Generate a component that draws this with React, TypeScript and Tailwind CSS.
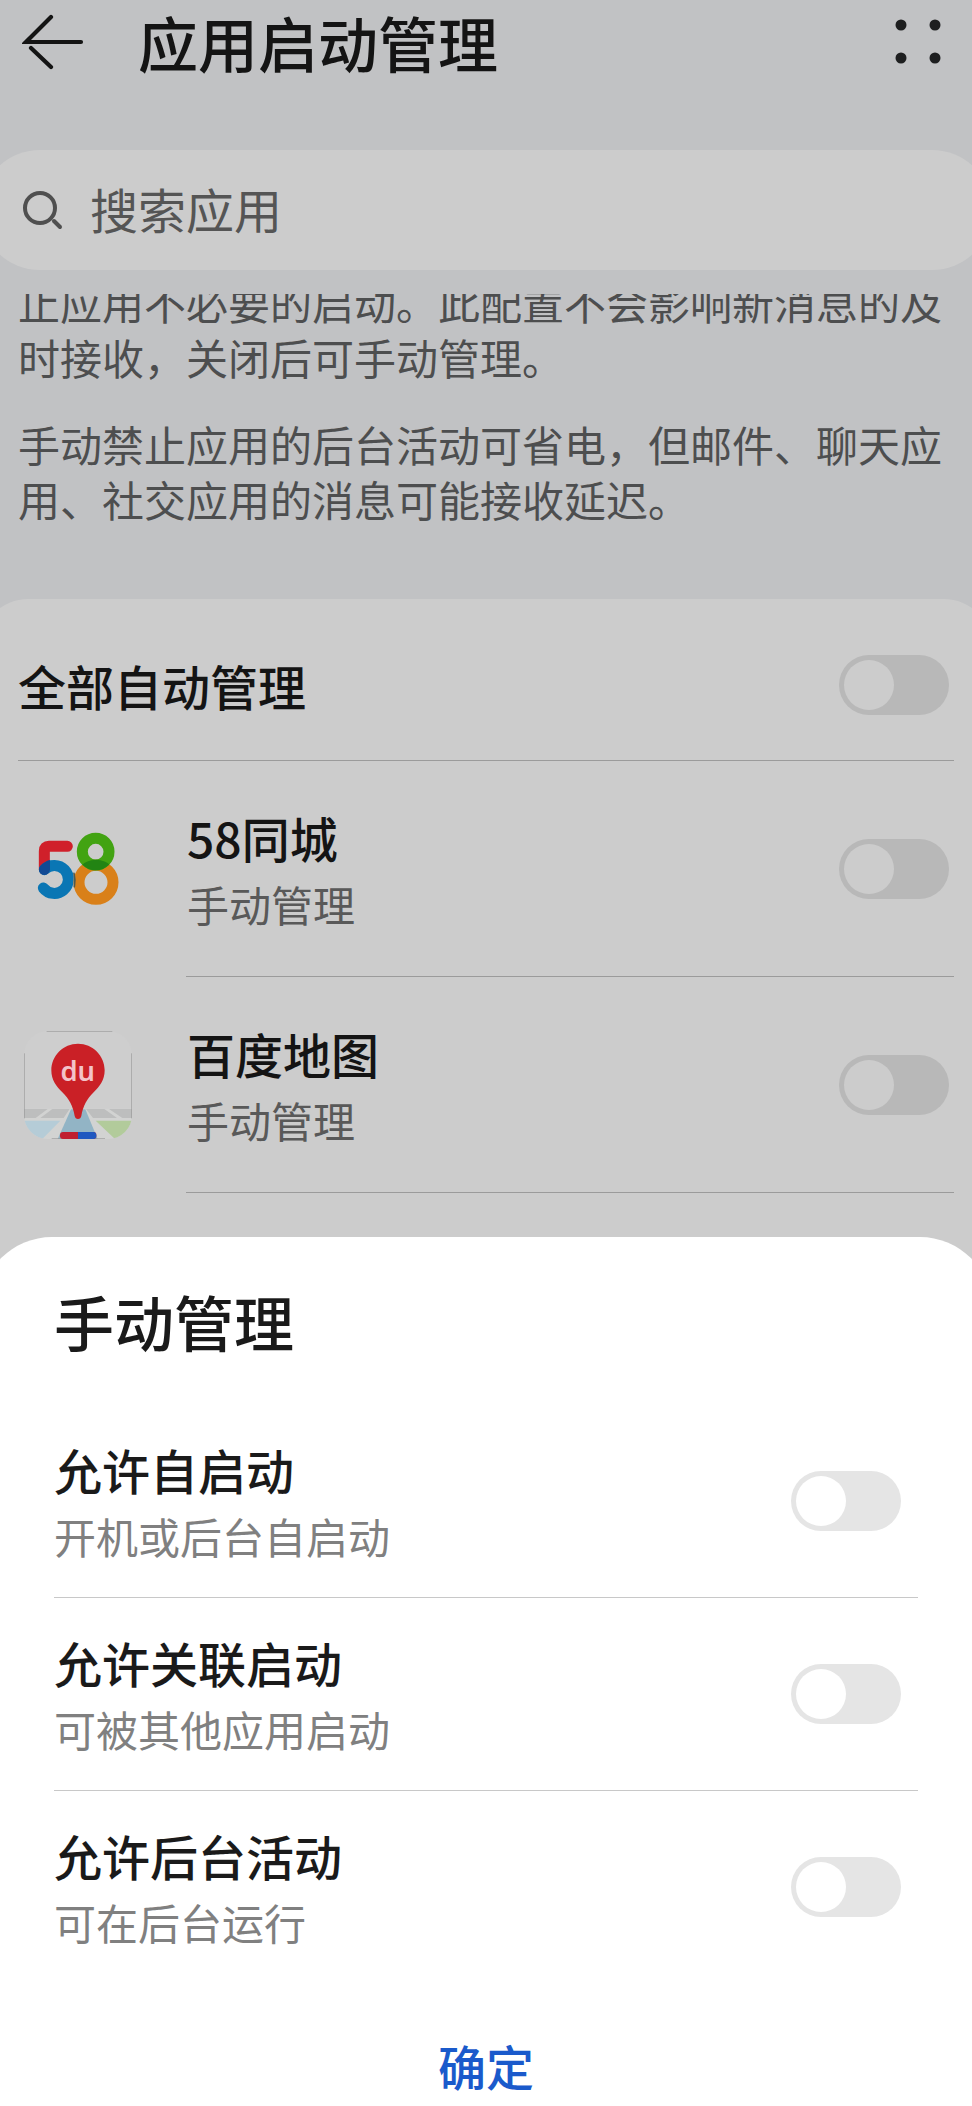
import { useId, type ReactNode } from 'react';

type Tone = 'dimmed' | 'light';

function Switch({ id, tone }: { id: string; tone: Tone }) {
  return (
    <input
      id={id}
      type="checkbox"
      role="switch"
      className={
        'h-[60px] w-[110px] shrink-0 cursor-pointer appearance-none rounded-full p-[5px] ' +
        "before:block before:size-[50px] before:rounded-full before:content-[''] checked:before:ml-auto " +
        (tone === 'dimmed' ? 'bg-[#b8b8b8] before:bg-[#cccccc]' : 'bg-[#e5e5e5] before:bg-white')
      }
    />
  );
}

function Logo58() {
  const clip = useId();
  return (
    <svg viewBox="-3 -15 324 324" className="size-[108px]" aria-hidden="true" fill="none" strokeLinecap="round">
      <clipPath id={clip + 'g'}>
        <circle cx="212" cy="95" r="56" />
      </clipPath>
      <clipPath id={clip + 'r'}>
        <path d="M41 116h34v32a17 17 0 0 1-34 0z" />
      </clipPath>
      <path d="M127 79H72Q58 79 58 93V148" stroke="#d0202a" strokeWidth="33" />
      <path d="M58 149A42 42 0 1 1 55 204" stroke="#0a76b4" strokeWidth="33" />
      <path d="M58 149A42 42 0 0 1 90 135" stroke="#124a94" strokeWidth="33" clipPath={`url(#${clip}r)`} />
      <circle cx="213" cy="187" r="51" stroke="#d98019" strokeWidth="33" />
      <circle cx="212" cy="95" r="40" stroke="#42a312" strokeWidth="33" />
      <circle cx="213" cy="187" r="51" stroke="#228413" strokeWidth="33" clipPath={`url(#${clip}g)`} />
      <path d="M147 160Q152 180 148 200" stroke="#4d5a52" strokeWidth="5" />
    </svg>
  );
}

function LogoMap() {
  const clip = useId();
  return (
    <svg viewBox="27 63 324 324" className="size-[108px]" aria-hidden="true">
      <clipPath id={clip}>
        <rect x="27" y="63" width="324" height="324" rx="72" />
      </clipPath>
      <g clipPath={`url(#${clip})`}>
        <rect x="27" y="63" width="324" height="324" fill="#cecece" />
        <rect x="27" y="296" width="324" height="91" fill="#d2d3d2" />
        <path d="M27 297H98L62 324H27zM112 297H164L146 324H76zM213 297H268L306 324H234zM282 297H351V324H322z" fill="#bdbebe" />
        <path d="M27 332H136L82 387H27z" fill="#b5ccd7" />
        <path d="M242 332H351V387H300z" fill="#b2cb9b" />
        <path d="M168 298H211L248 387H128z" fill="#92b4c5" />
      </g>
      <path d="M95 64H292M28 130V325M350 130V325M110 386H270" stroke="#929292" strokeWidth="2" />
      <rect x="135" y="366" width="109" height="21" rx="9" fill="#c01f31" />
      <path d="M189 366h46a9 9 0 0 1 9 9v3a9 9 0 0 1-9 9h-46z" fill="#1f58c0" />
      <path
        d="M189 101C145 101 109 137 109 181C109 210 124 229 142 247C162 267 174 288 179 318Q181 327 189 327Q197 327 199 318C204 288 216 267 236 247C254 229 269 210 269 181C269 137 233 101 189 101Z"
        fill="#ca2026"
      />
      <text x="188" y="214" textAnchor="middle" fontSize="82" fontWeight="600" fontFamily="'Noto Sans', sans-serif" fill="#f3c3c9">
        du
      </text>
    </svg>
  );
}

function AppRow({ id, name, note, logo }: { id: string; name: string; note: string; logo: ReactNode }) {
  return (
    <li className="flex pl-6">
      <div className="flex w-[162px] shrink-0 items-center">{logo}</div>
      <div className="mr-[18px] flex h-[216px] grow items-center justify-between border-b border-[#9b9b9b] pr-[5px]">
        <label htmlFor={id} className="block pl-px">
          <span className="block text-[48px] leading-[70px] font-medium text-[#141414]">{name}</span>
          <span className="block text-[42px] leading-[64px] text-[#595959]">{note}</span>
        </label>
        <Switch id={id} tone="dimmed" />
      </div>
    </li>
  );
}

const options = [
  { id: 'auto', title: '允许自启动', note: '开机或后台自启动' },
  { id: 'linked', title: '允许关联启动', note: '可被其他应用启动' },
  { id: 'background', title: '允许后台活动', note: '可在后台运行' },
];

export default function App() {
  return (
    <div className="min-h-screen overflow-hidden bg-[#c1c2c4] font-['Noto_Sans_CJK_SC',sans-serif]">
      <header className="flex h-[84px] items-center pr-[31px] pl-[22px]">
        <button type="button" aria-label="返回" className="shrink-0">
          <svg viewBox="0 0 62 60" className="h-[60px] w-[62px]" fill="none" stroke="#141414" strokeWidth="4.2" strokeLinecap="round">
            <path d="M59 30H4L29 5M9 36L29 55" />
          </svg>
        </button>
        <h1 className="grow pl-[54px] text-[60px] leading-[80px] font-medium text-[#141414]">应用启动管理</h1>
        <button type="button" aria-label="更多" className="shrink-0">
          <svg viewBox="0 0 46 46" className="size-[46px]" fill="#1e1f20">
            <circle cx="6" cy="6" r="5.5" />
            <circle cx="40" cy="6" r="5.5" />
            <circle cx="6" cy="39" r="5.5" />
            <circle cx="40" cy="39" r="5.5" />
          </svg>
        </button>
      </header>

      <label className="-mx-5 mt-[66px] flex h-[120px] items-center rounded-full bg-[#cccccc] pl-[42px]">
        <svg viewBox="0 0 42 40" className="h-10 w-[42px] shrink-0" fill="none" stroke="#4f4f4f" strokeWidth="4" strokeLinecap="round">
          <circle cx="18" cy="18" r="15" />
          <path d="M32 31L38 37" />
        </svg>
        <input
          type="text"
          aria-label="搜索应用"
          placeholder="搜索应用"
          className="h-[76px] grow bg-transparent pb-1 pl-[26px] text-[48px] text-[#1a1a1a] outline-none placeholder:text-[#555555]"
        />
      </label>

      <section className="mt-6 overflow-hidden px-[18px] text-[42px] leading-[55px] text-[#4d4e4f]">
        <p className="-mt-5">止应用不必要的启动。此配置不会影响新消息的及时接收，关闭后可手动管理。</p>
        <p className="mt-8">手动禁止应用的后台活动可省电，但邮件、聊天应用、社交应用的消息可能接收延迟。</p>
      </section>

      <main className="-mx-5 mt-[73px] rounded-t-[48px] bg-[#cccccc] px-5">
        <div className="mx-[18px] flex h-[162px] items-center justify-between border-b border-[#9b9b9b] pt-2.5 pr-[5px]">
          <label htmlFor="all" className="text-[48px] leading-[70px] font-medium text-[#141414]">
            全部自动管理
          </label>
          <Switch id="all" tone="dimmed" />
        </div>
        <ul>
          <AppRow id="app58" name="58同城" note="手动管理" logo={<Logo58 />} />
          <AppRow id="appMap" name="百度地图" note="手动管理" logo={<LogoMap />} />
        </ul>
      </main>

      <div className="-mx-5 bg-[#cccccc] pt-11">
        <section role="dialog" aria-labelledby="sheet-title" className="rounded-t-[72px] bg-white px-[74px] pb-[5px]">
          <h2 id="sheet-title" className="pt-[44px] pb-[44px] text-[60px] leading-[80px] font-medium text-[#1a1a1a]">
            手动管理
          </h2>
          {options.map((o) => (
            <div
              key={o.id}
              className="flex h-[193px] items-center justify-between border-b border-[#c8c8c8] pr-[17px] last-of-type:border-transparent"
            >
              <label htmlFor={o.id} className="block">
                <span className="block text-[48px] leading-[70px] font-medium text-[#1a1a1a]">{o.title}</span>
                <span className="block text-[42px] leading-[64px] text-[#808080]">{o.note}</span>
              </label>
              <Switch id={o.id} tone="light" />
            </div>
          ))}
          <button type="button" className="mt-[45px] block w-full text-[48px] leading-[72px] font-medium text-[#1a5acb]">
            确定
          </button>
        </section>
      </div>
    </div>
  );
}
